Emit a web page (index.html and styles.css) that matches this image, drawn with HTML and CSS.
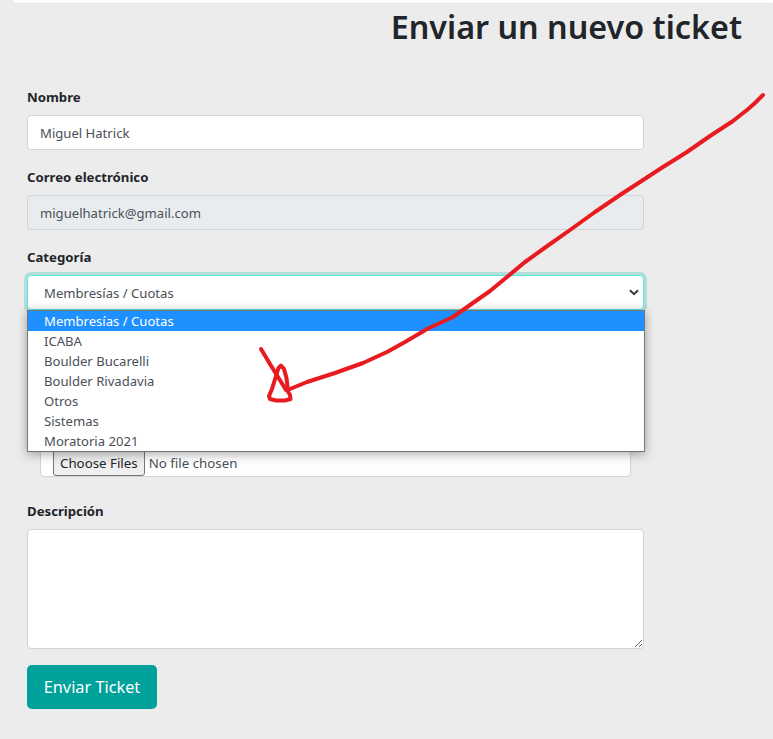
FILE: index.html
```html
<!DOCTYPE html>
<html lang="es">
<head>
<meta charset="utf-8">
<title>Enviar un nuevo ticket</title>
<link rel="stylesheet" href="styles.css">
</head>
<body>
<div class="topbar"></div>
<h1 class="title">Enviar un nuevo ticket</h1>
<form class="form">
  <div class="group">
    <label class="label">Nombre</label>
    <input class="control" type="text" value="Miguel Hatrick">
  </div>
  <div class="group">
    <label class="label">Correo electrónico</label>
    <input class="control control-disabled" type="text" value="miguelhatrick@gmail.com" disabled>
  </div>
  <div class="group group-select">
    <label class="label">Categoría</label>
    <div class="select">
      <span>Membresías / Cuotas</span>
      <svg class="chevron" width="10" height="7" viewBox="0 0 10 7"><path d="M1 1.200 5 5.200 9 1.200" fill="none" stroke="#343a40" stroke-width="2"/></svg>
    </div>
    <ul class="popup">
      <li class="option option-active">Membresías / Cuotas</li>
      <li class="option">ICABA</li>
      <li class="option">Boulder Bucarelli</li>
      <li class="option">Boulder Rivadavia</li>
      <li class="option">Otros</li>
      <li class="option">Sistemas</li>
      <li class="option">Moratoria 2021</li>
    </ul>
  </div>
  <div class="filebox">
    <input class="file" type="file" multiple>
  </div>
  <div class="group group-last">
    <label class="label">Descripción</label>
    <textarea class="control area"></textarea>
  </div>
  <button class="submit" type="button">Enviar Ticket</button>
</form>
<svg class="scribble" width="773" height="739" viewBox="0 0 773 739">
  <path d="M763 95 755 103 747 110 738 117 733 121 710 136 687 152 663 167 640 182 620 195 595 212 570 230 548 245.500 525 262 507 277 490 291 480 298 470 305 453 317 440 323 427 329 405 342 387 352 363 363 335 373 307 382 290 389"/>
  <path d="M261 349 270 364 278 377 286 390"/>
  <path d="M288 391 286.500 378 284 369 281 365.500 278.500 368 276 376 272 389 269 396 270 399 276 400.500 285 400.500 290.500 399 290 395 287 390"/>
</svg>
</body>
</html>
```
FILE: styles.css
```css
* { box-sizing: border-box; }
html, body { margin: 0; padding: 0; }
body {
  position: relative;
  height: 739px;
  overflow: hidden;
  background: #ececec;
  color: #212529;
  font-family: "Noto Sans", "Open Sans", sans-serif;
  font-size: 13.1px;
}
.topbar {
  height: 3px;
  margin-left: 13px;
  background: #fff;
  border-radius: 0 0 0 4px;
  box-shadow: 0 0 2px rgba(0, 0, 0, .1);
}
.title {
  margin: 0;
  height: 84px;
  padding: 0 31px 0 0;
  text-align: right;
  font-size: 32.3px;
  line-height: 47px;
  font-weight: 600;
}
.form {
  width: 644px;
  padding-left: 27px;
}
.group { margin-bottom: 17px; }
.group-select { position: relative; margin-bottom: 0; }
.group-last { margin-bottom: 16px; }
.label {
  display: block;
  height: 20px;
  margin-bottom: 8px;
  line-height: 20px;
  font-size: 13.2px;
  font-weight: 700;
}
.control {
  display: block;
  width: 100%;
  height: 35px;
  padding: 0 12px;
  border: 1px solid #ced4da;
  border-radius: 4px;
  background: #fff;
  color: #495057;
  font: inherit;
  outline: 0;
}
.control-disabled { background: #e9ecef; opacity: 1; }
.select {
  display: flex;
  align-items: center;
  justify-content: space-between;
  height: 35px;
  padding: 0 4px 0 16px;
  border: 1px solid #5ce8e2;
  border-radius: 4px;
  background: #fff;
  color: #495057;
  box-shadow: 0 0 0 3px #b4dcda;
}
.popup {
  position: absolute;
  z-index: 2;
  top: 63px;
  left: 0;
  width: 618px;
  margin: 0;
  padding: 0;
  list-style: none;
  background: #fff;
  border: 1px solid #767676;
  box-shadow: 0 2px 10px rgba(0, 0, 0, .35);
}
.option {
  height: 20px;
  padding-left: 16px;
  line-height: 20px;
  color: #495057;
}
.option-active { background: #1e90ff; color: #fff; }
.filebox {
  display: flex;
  align-items: flex-end;
  width: 591px;
  height: 150px;
  margin: 17px 0 24px 13px;
  padding: 0 12px;
  border: 1px solid #ced4da;
  border-radius: 4px;
  background: #fff;
}
.file {
  color: #495057;
  font: inherit;
  font-size: 13.3px;
}
.file::file-selector-button {
  height: 26px;
  padding: 0 6px;
  margin-right: 4px;
  border: 1px solid #767676;
  border-radius: 3px;
  background: #efefef;
  color: #212529;
  font: inherit;
}
.area { height: 120px; resize: vertical; padding: 8px 12px; }
.submit {
  display: block;
  width: 130px;
  height: 44px;
  padding: 0;
  border: 0;
  border-radius: 5px;
  background: #00a19b;
  color: #fff;
  font-family: inherit;
  font-size: 16.3px;
}
.scribble {
  position: absolute;
  z-index: 3;
  top: 0;
  left: 0;
  pointer-events: none;
}
.scribble path {
  fill: none;
  stroke: #e81c20;
  stroke-width: 4;
  stroke-linecap: round;
  stroke-linejoin: round;
}
```
